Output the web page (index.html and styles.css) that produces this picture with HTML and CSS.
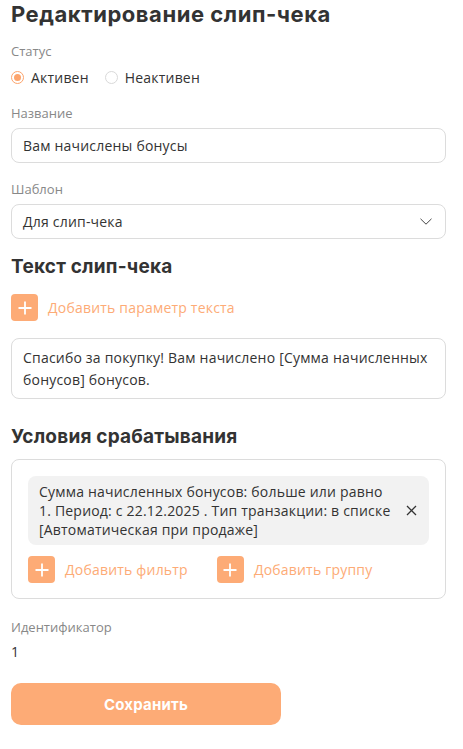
FILE: index.html
```html
<!DOCTYPE html>
<html lang="ru">
<head>
<meta charset="utf-8">
<link rel="stylesheet" href="styles.css">
</head>
<body>
<div class="page">
  <h1 class="title">Редактирование слип-чека</h1>

  <div class="label status-label">Статус</div>
  <div class="radios">
    <label class="radio"><span class="dot on"></span>Активен</label>
    <label class="radio"><span class="dot"></span>Неактивен</label>
  </div>

  <div class="label gap-top">Название</div>
  <div class="field">Вам начислены бонусы</div>

  <div class="label gap-top">Шаблон</div>
  <div class="field select">
    <span>Для слип-чека</span>
    <svg class="chev" width="12" height="7" viewBox="0 0 12 7"><path d="M0.5 0.8l5.5 5.4 5.5-5.4" fill="none" stroke="#444" stroke-width="1"/></svg>
  </div>

  <h2 class="section first">Текст слип-чека</h2>
  <div class="add add-param">
    <span class="plus"><svg width="14" height="14" viewBox="0 0 14 14"><path d="M7 0.5v13M0.5 7h13" stroke="#fff" stroke-width="1.8"/></svg></span>
    <span class="add-text">Добавить параметр текста</span>
  </div>
  <div class="field area">Спасибо за покупку! Вам начислено [Сумма начисленных бонусов] бонусов.</div>

  <h2 class="section second">Условия срабатывания</h2>
  <div class="card">
    <div class="cond">
      <span class="cond-text">Сумма начисленных бонусов: больше или равно 1. Период: с 22.12.2025 . Тип транзакции: в списке [Автоматическая при продаже]</span>
      <svg class="close" width="11" height="11" viewBox="0 0 11 11"><path d="M1 1l9 9M10 1l-9 9" stroke="#333" stroke-width="1.3"/></svg>
    </div>
    <div class="actions">
      <div class="add">
        <span class="plus"><svg width="14" height="14" viewBox="0 0 14 14"><path d="M7 0.5v13M0.5 7h13" stroke="#fff" stroke-width="1.8"/></svg></span>
        <span class="add-text">Добавить фильтр</span>
      </div>
      <div class="add">
        <span class="plus"><svg width="14" height="14" viewBox="0 0 14 14"><path d="M7 0.5v13M0.5 7h13" stroke="#fff" stroke-width="1.8"/></svg></span>
        <span class="add-text">Добавить группу</span>
      </div>
    </div>
  </div>

  <div class="label id-label">Идентификатор</div>
  <div class="value">1</div>

  <button class="save">Сохранить</button>
</div>
</body>
</html>
```

FILE: styles.css
```css
* { box-sizing: border-box; }
html, body { margin: 0; padding: 0; background: #fff; }
body {
  font-family: "Open Sans", "Noto Sans", sans-serif;
  color: #333;
  font-size: 14px;
  letter-spacing: 0.2px;
}
.page {
  width: 446px;
  padding: 0 0 0 11px;
}
.title {
  margin: 0;
  font-family: "Inter", "DejaVu Sans", sans-serif;
  font-weight: 700;
  font-size: 22px;
  line-height: 28px;
  color: #333;
  letter-spacing: 0.55px;
}
.label {
  font-size: 13px;
  line-height: 18px;
  color: #888;
  letter-spacing: 0;
}
.status-label { margin-top: 14px; }
.gap-top { margin-top: 17px; margin-bottom: 6px; }
.radios {
  display: flex;
  gap: 16px;
  margin-top: 7px;
  height: 20px;
  align-items: center;
}
.radio {
  display: flex;
  align-items: center;
  gap: 7px;
  font-size: 14px;
  color: #333;
}
.dot {
  width: 13px;
  height: 13px;
  border-radius: 50%;
  border: 1px solid #d9d9d9;
  display: inline-block;
  position: relative;
}
.dot.on {
  border-color: #fda46c;
}
.dot.on::after {
  content: "";
  position: absolute;
  left: 2px; top: 2px;
  width: 7px; height: 7px;
  border-radius: 50%;
  background: #fda46c;
}
.field {
  border: 1px solid #dcdcdc;
  border-radius: 8px;
  height: 35px;
  padding: 0 11px;
  display: flex;
  align-items: center;
  font-size: 14px;
  color: #333;
}
.select {
  justify-content: space-between;
  padding-right: 13px;
}
.section {
  margin: 0;
  font-family: "Inter", "DejaVu Sans", sans-serif;
  font-weight: 700;
  font-size: 19px;
  line-height: 24px;
  color: #333;
}
.section.first { margin-top: 16px; }
.section.second { margin-top: 26px; }
.add {
  display: flex;
  align-items: center;
  gap: 10px;
}
.add-param { margin-top: 15px; }
.plus {
  width: 27px;
  height: 27px;
  border-radius: 4px;
  background: #fdab76;
  display: flex;
  align-items: center;
  justify-content: center;
}
.add-text {
  color: #fdab76;
  font-size: 14px;
}
.area {
  margin-top: 17px;
  height: 61px;
  line-height: 22px;
  padding: 8px 11px;
  align-items: flex-start;
}
.card {
  margin-top: 10px;
  border: 1px solid #dcdcdc;
  border-radius: 8px;
  padding: 16px 16px 15px 16px;
}
.cond {
  background: #f2f2f2;
  border-radius: 8px;
  padding: 6px 12px 6px 11px;
  display: flex;
  align-items: center;
  gap: 12px;
  line-height: 19px;
}
.cond-text { flex: 1; }
.actions {
  display: flex;
  gap: 29px;
  margin-top: 11px;
}
.id-label { margin-top: 19px; }
.value {
  margin-top: 6px;
  line-height: 20px;
  font-size: 14px;
}
.save {
  margin-top: 21px;
  width: 270px;
  height: 42px;
  border: none;
  border-radius: 10px;
  background: #fdab76;
  color: #fff;
  font-family: "Inter", "DejaVu Sans", sans-serif;
  font-weight: 700;
  font-size: 15px;
  letter-spacing: 0.2px;
}
```
